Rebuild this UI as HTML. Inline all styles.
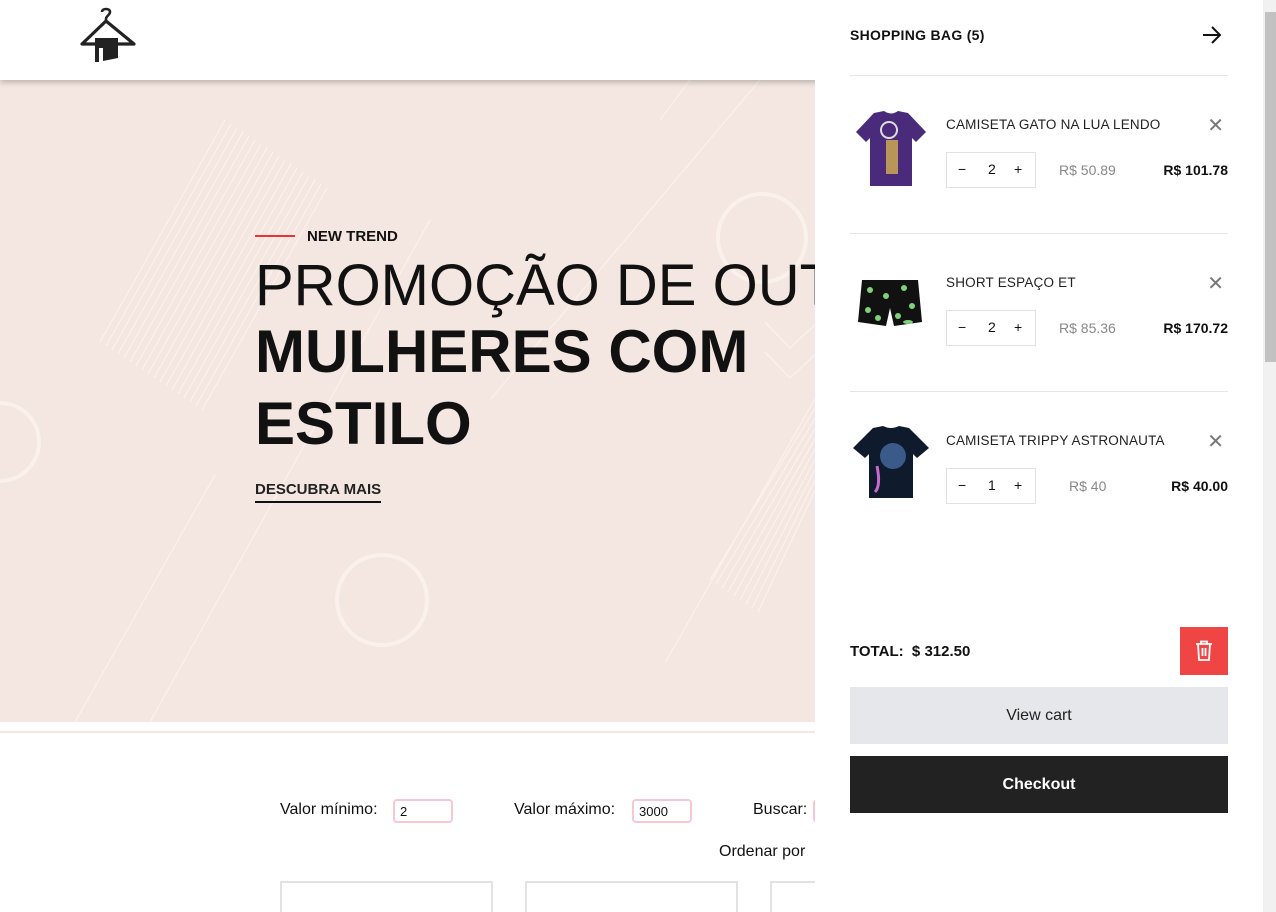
<!DOCTYPE html>
<html><head><meta charset="utf-8">
<style>
*{margin:0;padding:0;box-sizing:border-box}
html,body{width:1276px;height:912px;overflow:hidden}
body{font-family:"Liberation Sans",sans-serif;background:#fff;position:relative;color:#111}
.header{position:absolute;left:0;top:0;width:1263px;height:80px;background:#fff;box-shadow:0 2px 6px rgba(0,0,0,.25);z-index:2}
.hero{position:absolute;left:0;top:80px;width:1263px;height:642px;background:#f4e6e0;overflow:hidden}
.abs{position:absolute}
.panel{position:absolute;left:815px;top:0;width:448px;height:912px;background:#fff;z-index:5}
.sb{position:absolute;left:1263px;top:0;width:13px;height:912px;background:#f1f1f1;z-index:6}
.thumb{position:absolute;left:1265px;top:12px;width:11px;height:350px;background:#c1c1c1;z-index:7}
.item{position:absolute;left:850px;width:378px}
.name{position:absolute;left:96px;font-size:13.5px;color:#222;letter-spacing:.2px}
.qty{position:absolute;left:96px;width:90px;height:36px;border:1px solid #e2e2e2;font-size:14px}
.qty span{position:absolute;top:8px}
.price{position:absolute;font-size:14px;color:#888}
.tot{position:absolute;right:0;font-size:14px;font-weight:bold;color:#111}
.x{position:absolute;right:4px;font-size:20px;color:#777}
.sep{position:absolute;left:850px;width:378px;height:1px;background:#e6e6e6}
.lbl{position:absolute;font-size:16px;color:#111}
.inp{position:absolute;height:24px;border:2px solid #f8c8d2;border-radius:4px;font-size:13px;padding:3px 5px;background:#fff}
.card{position:absolute;top:881px;width:213px;height:40px;border:2px solid #e2e2e2}
</style></head><body>
<div class="header">
<svg class="abs" style="left:78px;top:6px" width="60" height="58" viewBox="0 0 60 58">
<path d="M24 6 C24 2 32 2 32 6 C32 9 28 10 28 13 L28 16" fill="none" stroke="#222" stroke-width="2.6"/>
<path d="M28 15 L4 38 L56 38 Z" fill="none" stroke="#222" stroke-width="3.2" stroke-linejoin="round"/>
<path d="M17 32 L40 32 L40 52 L25 55 L25 42 L21 42 L21 56 L17 56 Z" fill="#222"/>
</svg>
</div>
<div class="hero">
<svg class="abs" style="left:0;top:0" width="820" height="642">
<g stroke="#fbf1ec" stroke-width="1.3" fill="none">
<g>
<line x1="100" y1="262" x2="225" y2="40"/><line x1="106" y1="266" x2="231" y2="44"/><line x1="112" y1="270" x2="237" y2="48"/><line x1="118" y1="274" x2="243" y2="52"/><line x1="124" y1="278" x2="249" y2="56"/><line x1="130" y1="282" x2="255" y2="60"/><line x1="136" y1="286" x2="261" y2="64"/><line x1="142" y1="290" x2="267" y2="68"/><line x1="148" y1="294" x2="273" y2="72"/><line x1="154" y1="298" x2="279" y2="76"/><line x1="160" y1="302" x2="285" y2="80"/><line x1="166" y1="306" x2="291" y2="84"/><line x1="172" y1="310" x2="297" y2="88"/><line x1="178" y1="314" x2="303" y2="92"/><line x1="184" y1="318" x2="309" y2="96"/><line x1="190" y1="322" x2="315" y2="100"/><line x1="196" y1="326" x2="321" y2="104"/><line x1="202" y1="330" x2="327" y2="108"/>
</g>
<g>
<line x1="710" y1="500" x2="820" y2="320"/><line x1="716" y1="504" x2="820" y2="330"/><line x1="722" y1="508" x2="820" y2="340"/><line x1="728" y1="512" x2="820" y2="350"/><line x1="734" y1="516" x2="820" y2="360"/><line x1="740" y1="520" x2="820" y2="370"/><line x1="746" y1="524" x2="820" y2="380"/><line x1="752" y1="528" x2="820" y2="390"/><line x1="758" y1="532" x2="820" y2="400"/>
</g>
<line x1="660" y1="40" x2="690" y2="0"/>
<line x1="490" y1="320" x2="760" y2="0"/>
<line x1="75" y1="642" x2="215" y2="395"/>
<line x1="150" y1="642" x2="430" y2="140"/>
<line x1="665" y1="583" x2="820" y2="310"/>
<polyline points="765,242 790,268 820,240"/><polyline points="765,272 790,298 820,270"/>
</g>
<g stroke="#fbf1ec" stroke-width="4" fill="none">
<circle cx="762" cy="158" r="44"/>
<circle cx="382" cy="520" r="45"/>
<circle cx="0" cy="362" r="39"/>
</g>
</svg>
<div class="abs" style="left:255px;top:155px;width:40px;height:2px;background:#e53637"></div>
<div class="abs" style="left:307px;top:148px;font-size:15px;font-weight:bold;color:#111">NEW TREND</div>
<div class="abs" style="left:255px;top:172px;font-size:58px;font-weight:normal;color:#111;white-space:nowrap;letter-spacing:0px">PROMOÇÃO DE OUTONO</div>
<div class="abs" style="left:255px;top:236px;font-size:60px;font-weight:bold;line-height:72px;color:#111;letter-spacing:0px">MULHERES COM<br>ESTILO</div>
<div class="abs" style="left:255px;top:401px;font-size:15px;font-weight:bold;color:#222;border-bottom:2px solid #111;padding-bottom:3px">DESCUBRA MAIS</div>
</div>
<div class="abs" style="left:0;top:731px;width:1263px;height:2px;background:#f4e6e0"></div>
<div class="lbl" style="left:280px;top:801px">Valor mínimo:</div>
<div class="inp" style="left:393px;top:799px;width:60px">2</div>
<div class="lbl" style="left:514px;top:801px">Valor máximo:</div>
<div class="inp" style="left:632px;top:799px;width:60px">3000</div>
<div class="lbl" style="left:753px;top:801px">Buscar:</div>
<div class="inp" style="left:813px;top:799px;width:60px"></div>
<div class="lbl" style="left:719px;top:843px">Ordenar por</div>
<div class="card" style="left:280px"></div>
<div class="card" style="left:525px"></div>
<div class="card" style="left:770px"></div>

<div class="panel"></div>
<div style="position:absolute;z-index:8;left:0;top:0;width:1263px;height:912px">
<div class="abs" style="left:850px;top:27px;font-size:14px;font-weight:bold;color:#111;letter-spacing:.3px">SHOPPING BAG (5)</div>
<svg class="abs" style="left:1201px;top:25px" width="22" height="20" viewBox="0 0 22 20"><path d="M2 10 H19 M11 2 L19 10 L11 18" fill="none" stroke="#111" stroke-width="2"/></svg>
<div class="sep" style="top:75px"></div>

<div class="item" style="top:110px">
<svg class="abs" style="left:4px;top:0" width="74" height="78" viewBox="0 0 74 78"><path d="M20 3 L30 1 Q37 6 44 1 L54 3 L72 22 L62 32 L58 28 L58 76 L16 76 L16 28 L12 32 L2 22 Z" fill="#4a2a7a"/><circle cx="35" cy="20" r="8" fill="none" stroke="#ddd" stroke-width="2"/><rect x="32" y="30" width="12" height="34" fill="#b9955a"/></svg>
<div class="name" style="top:7px">CAMISETA GATO NA LUA LENDO</div>
<div class="x" style="top:3px">✕</div>
<div class="qty" style="top:42px"><span style="left:11px">−</span><span style="left:41px">2</span><span style="left:67px">+</span></div>
<div class="price" style="left:209px;top:52px">R$ 50.89</div>
<div class="tot" style="top:52px">R$ 101.78</div>
</div>
<div class="sep" style="top:233px"></div>

<div class="item" style="top:268px">
<svg class="abs" style="left:8px;top:10px" width="64" height="52" viewBox="0 0 64 52"><path d="M4 2 L60 2 L64 44 L36 48 L32 30 L28 48 L0 44 Z" fill="#111"/><g fill="#7fd17a"><circle cx="12" cy="12" r="3"/><circle cx="28" cy="18" r="3"/><circle cx="46" cy="10" r="3"/><circle cx="54" cy="28" r="3"/><circle cx="10" cy="32" r="3"/><circle cx="40" cy="38" r="3"/><circle cx="20" cy="40" r="3"/><ellipse cx="50" cy="44" rx="5" ry="2"/></g></svg>
<div class="name" style="top:7px">SHORT ESPAÇO ET</div>
<div class="x" style="top:3px">✕</div>
<div class="qty" style="top:42px"><span style="left:11px">−</span><span style="left:41px">2</span><span style="left:67px">+</span></div>
<div class="price" style="left:209px;top:52px">R$ 85.36</div>
<div class="tot" style="top:52px">R$ 170.72</div>
</div>
<div class="sep" style="top:391px"></div>

<div class="item" style="top:426px">
<svg class="abs" style="left:3px;top:0" width="76" height="74" viewBox="0 0 76 74"><path d="M20 2 L30 0 Q38 4 46 0 L56 2 L76 22 L64 32 L60 28 L60 72 L16 72 L16 28 L12 32 L0 22 Z" fill="#0f1a2c"/><circle cx="40" cy="30" r="13" fill="#3a5a8a"/><path d="M24 40 Q28 60 22 66" stroke="#c86ad0" stroke-width="3" fill="none"/></svg>
<div class="name" style="top:7px">CAMISETA TRIPPY ASTRONAUTA</div>
<div class="x" style="top:3px">✕</div>
<div class="qty" style="top:42px"><span style="left:11px">−</span><span style="left:41px">1</span><span style="left:67px">+</span></div>
<div class="price" style="left:219px;top:52px">R$ 40</div>
<div class="tot" style="top:52px">R$ 40.00</div>
</div>

<div class="abs" style="left:850px;top:643px;font-size:15px;font-weight:bold;color:#111">TOTAL:&nbsp; $ 312.50</div>
<div class="abs" style="left:1180px;top:627px;width:48px;height:48px;background:#f04545"></div>
<svg class="abs" style="left:1194px;top:640px" width="20" height="22" viewBox="0 0 20 22"><path d="M2 4 H18 M7 4 V1.5 H13 V4 M4 4 L5 20 H15 L16 4 M8.5 8 V16 M11.5 8 V16" fill="none" stroke="#fff" stroke-width="1.8"/></svg>
<div class="abs" style="left:850px;top:687px;width:378px;height:57px;background:#e6e7eb;text-align:center;line-height:57px;font-size:16px;color:#222">View cart</div>
<div class="abs" style="left:850px;top:756px;width:378px;height:57px;background:#222;text-align:center;line-height:57px;font-size:16px;font-weight:bold;color:#fff">Checkout</div>
</div>
<div class="sb"></div><div class="thumb"></div>
</body></html>
